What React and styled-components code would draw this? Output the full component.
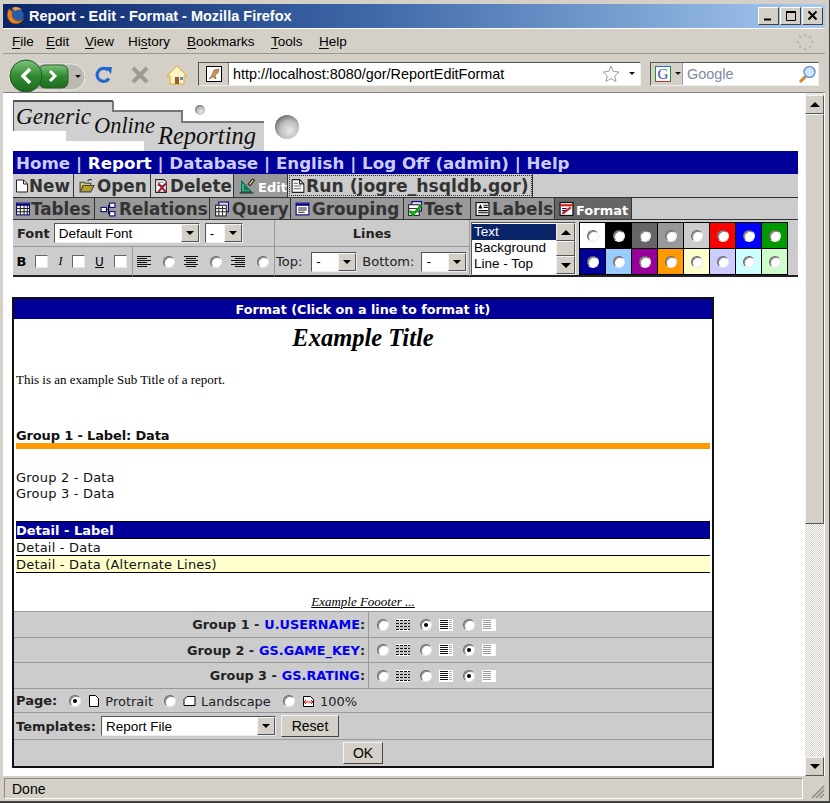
import React from 'react'
import styled, { createGlobalStyle } from 'styled-components'

const Global = createGlobalStyle`
html, body { margin: 0; padding: 0; background: #d4d0c8; overflow: hidden; }
* { box-sizing: border-box; }
`
const VERDANA = `"DejaVu Sans", sans-serif`
const TAHOMA = `"Liberation Sans", sans-serif`

const Window = styled.div`
width: 830px;
height: 803px;
display: flex;
flex-direction: column;
padding: 4px 4px 0 3px;
background: #d4d0c8;
border-right: 1px solid #404040;
border-bottom: 2px solid #404040;
font-family: ${TAHOMA};
overflow: hidden;
`
const TitleBar = styled.div`
height: 24px;
flex: none;
display: flex;
align-items: center;
padding: 0 2px 1px 3px;
background: linear-gradient(90deg, #0a246a 0%, #3f69a8 45%, #a6caf0 100%);
`
const TitleText = styled.span`
flex: 1;
margin-left: 4px;
color: #fff;
font: bold 14.5px ${TAHOMA};
`
const WinButton = styled.div`
width: 21px;
height: 18px;
display: flex;
align-items: center;
justify-content: center;
margin-left: 1px;
background: #d4d0c8;
border: 1px solid;
border-color: #fff #404040 #404040 #fff;
`
const MenuBar = styled.div`
height: 26px;
flex: none;
display: flex;
align-items: center;
padding: 1px 8px 0 9px;
border-bottom: 1px solid #9a978f;
border-top: 1px solid #fff;
font-size: 13.5px;
color: #000;
`
const MenuItem = styled.span`
width: ${p => p.$w}px;
flex: none;
u { text-underline-offset: 2px; }
`
const Throbber = styled.svg`
margin-left: auto;
margin-right: 3px;
`
const NavBar = styled.div`
height: 39px;
flex: none;
display: flex;
align-items: center;
padding: 2px 4px 0 6px;
border-bottom: 1px solid #808080;
`
const BackForward = styled.svg`
flex: none;
margin-top: 1px;
`
const NavIcon = styled.svg`
flex: none;
margin-top: 1px;
margin-left: ${p => p.$gap}px;
`
const UrlBox = styled.div`
width: 443px;
height: 24px;
flex: none;
display: flex;
align-items: center;
margin-left: 11px;
background: #fff;
border: 1px solid;
border-color: #555 #eee #eee #555;
font-size: 14.4px;
`
const Favicon = styled.div`
width: 30px;
height: 22px;
flex: none;
display: flex;
align-items: center;
justify-content: center;
margin-right: 4px;
background: #d4d0c8;
border-right: 1px solid #808080;
`
const UrlText = styled.span`
flex: 1;
color: #000;
`
const SearchBox = styled(UrlBox)`
width: 169px;
margin-left: 9px;
`
const EngineButton = styled.div`
width: 32px;
height: 22px;
flex: none;
display: flex;
align-items: center;
gap: 4px;
padding-left: 4px;
margin-right: 4px;
background: #d4d0c8;
border-right: 1px solid #a0a0a0;
`
const GoogleIcon = styled.div`
width: 16px;
height: 16px;
display: flex;
align-items: center;
justify-content: center;
background: #fff;
border: 1px solid;
border-color: #2a6fd0 #1a9a1a #d03030 #1a9a1a;
color: #1f4fc0;
font: 15px "Liberation Serif", serif;
line-height: 14px;
`
const Placeholder = styled.span`
flex: 1;
color: #7c8aa0;
`

const Viewport = styled.div`
flex: 1;
min-height: 0;
display: flex;
background: #fff;
`
const Page = styled.div`
flex: 1;
min-width: 0;
padding: 7px 0 0 10px;
overflow: hidden;
`
const LogoArt = styled.svg`
display: block;
`
const SiteNav = styled.div`
width: 785px;
height: 23px;
display: flex;
align-items: center;
padding-left: 3px;
background: #000099;
color: #ccccff;
font: bold 16.7px ${VERDANA};
white-space: pre;
b { color: #fff; }
`
const ActionRow = styled.div`
width: 785px;
height: 24px;
display: flex;
align-items: stretch;
background: #ccc;
border-bottom: 1px solid #333;
`
const TabRow = styled(ActionRow)`
height: 22px;
`
const ActionCell = styled.div`
width: ${p => p.$w}px;
flex: none;
display: flex;
align-items: center;
padding-left: 1px;
border-right: 1px solid #333;
background: ${p => (p.$active || p.$tab ? '#999' : '#ccc')};
color: ${p => (p.$active ? '#fff' : '#333')};
font: bold ${p => (p.$active ? 13 : p.$focus ? 17.2 : 16.8)}px ${VERDANA};
white-space: nowrap;
${p => p.$active && p.$tab && 'background: #666;'}
${p => p.$focus && 'outline: 1px dotted #333; outline-offset: -2px;'}
`
const IconSlot = styled.span`
width: ${p => p.$w}px;
flex: none;
display: flex;
align-items: center;
justify-content: center;
`
const ActiveLabel = styled.span`
margin-top: 4px;
`

const FormatBar = styled.div`
width: 785px;
height: 57px;
display: grid;
grid-template-columns: 262px 195px 108px 220px;
grid-template-rows: 27px 29px;
background: #ccc;
border-bottom: 2px solid #222;
font: 13px ${VERDANA};
color: #222;
`
const ToolCell = styled.div`
display: flex;
align-items: center;
min-width: 0;
border-right: 1px solid #999;
border-bottom: ${p => (p.$top ? '1px solid #999' : 'none')};
padding-left: ${p => p.$pad ?? 0}px;
justify-content: ${p => (p.$center ? 'center' : 'flex-start')};
`
const StyleSplit = styled.div`
width: 120px;
height: 100%;
flex: none;
display: flex;
align-items: center;
padding-left: 3px;
border-right: 1px solid #999;
`
const ListCell = styled.div`
grid-row: 1 / 3;
grid-column: 3;
padding: 2px 2px 1px 1px;
`
const ListBox = styled.div`
height: 100%;
display: flex;
background: #fff;
border: 1px solid;
border-color: #555 #eee #eee #555;
font: 13.5px ${TAHOMA};
color: #000;
`
const ListItems = styled.div`
flex: 1;
padding-top: 1px;
`
const ListItem = styled.div`
height: 16px;
line-height: 16px;
padding-left: 2px;
background: ${p => (p.$on ? '#0a246a' : 'transparent')};
color: ${p => (p.$on ? '#fff' : '#000')};
`
const MiniScroll = styled.div`
width: 19px;
flex: none;
display: flex;
flex-direction: column;
`
const ArrowButton = styled.div`
width: ${p => p.$w ?? 19}px;
height: ${p => p.$h ?? 19}px;
flex: ${p => (p.$grow ? 1 : 'none')};
display: flex;
align-items: center;
justify-content: center;
background: #d4d0c8;
border: 1px solid;
border-color: #f4f4f4 #555 #555 #f4f4f4;
`
const Triangle = styled.i`
display: block;
width: 0;
height: 0;
border-left: ${p => p.$s ?? 4}px solid transparent;
border-right: ${p => p.$s ?? 4}px solid transparent;
${p => (p.$up ? 'border-bottom' : 'border-top')}: ${p => p.$s ?? 4}px solid #000;
`
const SwatchCell = styled.div`
grid-row: 1 / 3;
grid-column: 4;
padding: 2px 0 0 1px;
`
const SwatchGrid = styled.div`
width: 209px;
display: grid;
grid-template-columns: repeat(8, 26px);
grid-auto-rows: 26px;
background: #000;
border-top: 1px solid #000;
border-left: 1px solid #000;
`
const Swatch = styled.div`
display: flex;
align-items: center;
justify-content: center;
background: ${p => p.$c};
border-right: 1px solid #000;
border-bottom: 1px solid #000;
`
const Radio = styled.input.attrs({ type: 'radio', readOnly: true, tabIndex: -1 })`
appearance: none;
width: 12px;
height: 12px;
flex: none;
margin: 0;
border-radius: 50%;
background: #fff;
border: 1px solid;
border-color: #666 #e8e8e8 #e8e8e8 #666;
box-shadow: inset 1px 1px 0 #888;
position: relative;
&:checked::after {
  content: '';
  position: absolute;
  left: 3px;
  top: 3px;
  width: 4px;
  height: 4px;
  border-radius: 50%;
  background: #000;
}
`
const SelectBox = styled.div`
width: ${p => p.$w}px;
height: 20px;
flex: none;
display: flex;
align-items: center;
margin-left: ${p => p.$ml ?? 0}px;
background: #fff;
border: 1px solid;
border-color: #555 #eee #eee #555;
font: 13.5px ${TAHOMA};
color: #000;
`
const SelectText = styled.span`
flex: 1;
padding-left: 4px;
white-space: nowrap;
`
const CheckBox = styled.span`
width: 13px;
height: 13px;
flex: none;
background: #fff;
border: 1px solid;
border-color: #666 #e8e8e8 #e8e8e8 #666;
margin: 0 ${p => p.$mr}px 0 ${p => p.$ml}px;
`
const StyleLabel = styled.span`
width: 11px;
flex: none;
text-align: center;
color: #000;
font: ${p => (p.$b ? 'bold 13px' : '12px')} ${p => (p.$i ? '"Liberation Serif", serif' : VERDANA)};
font-style: ${p => (p.$i ? 'italic' : 'normal')};
text-decoration: ${p => (p.$u ? 'underline' : 'none')};
`
const AlignGroup = styled.div`
display: flex;
align-items: center;
gap: 9px;
padding-left: 4px;
`
const AlignItem = styled.div`
display: flex;
align-items: center;
gap: 11px;
`
const Bold = styled.b`
margin-right: ${p => p.$mr ?? 0}px;
`
const LineLabel = styled.span`
margin-left: ${p => p.$ml ?? 0}px;
`

const Panel = styled.div`
width: 702px;
margin: 20px 0 0 -1px;
border: 2px solid #111;
background: #fff;
`
const PanelHeader = styled.div`
height: 20px;
display: flex;
align-items: center;
justify-content: center;
background: #000099;
color: #fff;
font: bold 12.75px ${VERDANA};
`
const ReportTitle = styled.div`
height: 36px;
text-align: center;
font: italic bold 24.5px/37px "Liberation Serif", serif;
color: #000;
`
const Report = styled.div`
padding: 0 2px;
color: #111;
font: 13px/16px ${VERDANA};
letter-spacing: 0.2px;
`
const SubTitle = styled.div`
margin-top: 17px;
font: 13px/16px "Liberation Serif", serif;
letter-spacing: 0;
color: #000;
`
const GroupLabel = styled.div`
margin-top: 40px;
height: 15px;
font-weight: bold;
letter-spacing: -0.15px;
`
const OrangeBar = styled.div`
height: 6px;
background: #ff9900;
`
const GroupData = styled.div`
margin-top: ${p => p.$mt ?? 0}px;
`
const DetailLabel = styled.div`
margin-top: 19px;
height: 18px;
line-height: 17px;
background: #000099;
color: #fff;
font-weight: bold;
letter-spacing: 0;
border-top: 1px solid #000;
border-bottom: 1px solid #000;
`
const DetailRow = styled.div`
height: 17px;
line-height: 18px;
background: ${p => (p.$alt ? '#ffffcc' : '#fff')};
border-bottom: 1px solid #000;
`
const Footer = styled.div`
margin-top: 21px;
height: 17px;
text-align: center;
font: italic 13px/16px "Liberation Serif", serif;
letter-spacing: 0;
text-decoration: underline;
color: #000;
`
const FormRow = styled.div`
height: ${p => p.$h}px;
display: flex;
align-items: center;
background: #ccc;
border-top: 1px solid #999;
color: #222;
font: 13px ${VERDANA};
padding-left: ${p => p.$pad ?? 0}px;
justify-content: ${p => (p.$center ? 'center' : 'flex-start')};
`
const GroupName = styled.div`
width: 355px;
height: 100%;
flex: none;
display: flex;
align-items: center;
justify-content: flex-end;
padding-right: 3px;
font-weight: bold;
font-size: 12.8px;
border-right: 1px solid #999;
color: #222;
span { color: #0000ee; margin-left: 5px; }
`
const GroupChoices = styled.div`
display: flex;
align-items: center;
padding-left: 8px;
`
const Choice = styled.div`
width: 43px;
display: flex;
align-items: center;
gap: 7px;
`
const PageOption = styled.label`
display: flex;
align-items: center;
margin-left: ${p => p.$ml}px;
gap: 7px;
`
const PageText = styled.span`
display: flex;
align-items: center;
gap: 5px;
padding-top: 1px;
`
const FormButton = styled.button`
width: ${p => p.$w}px;
height: 22px;
flex: none;
margin-left: ${p => p.$ml ?? 0}px;
padding: 0;
background: #d4d0c8;
border: 1px solid;
border-color: #f4f4f4 #444 #444 #f4f4f4;
color: #000;
font: 14px ${TAHOMA};
`

const ScrollBar = styled.div`
width: 19px;
flex: none;
margin-right: 1px;
display: flex;
flex-direction: column;
padding-top: 2px;
background: repeating-conic-gradient(#d4d0c8 0 25%, #fff 0 50%) 0 0 / 2px 2px;
`
const Thumb = styled.div`
height: 410px;
flex: none;
background: #d4d0c8;
border: 1px solid;
border-color: #f4f4f4 #555 #555 #f4f4f4;
`
const Track = styled.div`
flex: 1;
`
const StatusBar = styled.div`
height: 25px;
flex: none;
display: flex;
align-items: center;
padding: 2px 0 2px 1px;
font-size: 14px;
color: #000;
background: #d4d0c8;
`
const StatusText = styled.div`
width: 799px;
height: 21px;
display: flex;
align-items: center;
padding-left: 7px;
border: 1px solid;
border-color: #8a8880 #fff #fff #8a8880;
`
const Grip = styled.svg`
margin-left: 8px;
margin-top: 6px;
flex: none;
`

const Ico = ({ name, size }) => {
  const common = { width: size, height: 16, viewBox: '0 0 14 15', style: { flex: 'none' } }
  switch (name) {
    case 'new':
    case 'run':
      return (
        <svg {...common}>
          <path d="M1.500 1.500h7l4 4v8h-11z" fill="#fff" stroke="#222" />
          <path d="M8.500 1.500v4h4" fill="none" stroke="#222" />
          {name === 'run' && <path d="M3 5h4M3 7.500h7M3 10h7" stroke="#666" />}
        </svg>
      )
    case 'open':
      return (
        <svg {...common}>
          <path d="M1 4h4l1 1h5v2H4l-3 6z" fill="#d8c860" stroke="#444" />
          <path d="M1 13l3-6h10l-3 6z" fill="#b8a030" stroke="#444" />
          <path d="M8 3c1-2 3-2 4-1" fill="none" stroke="#222" />
        </svg>
      )
    case 'delete':
      return (
        <svg {...common}>
          <path d="M1.500 1.500h8l2 2v10h-10z" fill="#fff" stroke="#222" />
          <path d="M3 4h6M3 7h6" stroke="#888" />
          <path d="M4 5l7 8M11 5l-7 8" stroke="#a01830" strokeWidth="2" />
        </svg>
      )
    case 'edit':
      return (
        <svg {...common}>
          <path d="M2 13V3l9 10z" fill="#40c0b0" stroke="#063" />
          <path d="M4.500 11V8l3 3z" fill="#999" stroke="#063" />
          <path d="M8 6l4-5 2 1-4 5z" fill="#ffe060" stroke="#222" />
          <path d="M0 14h13" stroke="#222" />
        </svg>
      )
    case 'tables':
      return (
        <svg {...common}>
          <rect x="1" y="2" width="12" height="11" fill="#fff" stroke="#000080" />
          <path d="M1 3.500h12" stroke="#000080" strokeWidth="2" />
          <path d="M1 7h12M1 10h12M4.500 4v9M8 4v9M11 4v9" stroke="#222" />
        </svg>
      )
    case 'relations':
      return (
        <svg {...common}>
          <rect x="0.500" y="6" width="5" height="4" fill="#fff" stroke="#000080" />
          <rect x="8.500" y="2" width="5" height="4" fill="#fff" stroke="#000080" />
          <rect x="8.500" y="10" width="5" height="4" fill="#fff" stroke="#000080" />
          <path d="M6 8h1.500M7.500 4v8M7.500 4h1M7.500 12h1" stroke="#000" />
        </svg>
      )
    case 'query':
      return (
        <svg {...common}>
          <rect x="4" y="1" width="9" height="9" fill="#dde" stroke="#000080" />
          <rect x="1" y="4" width="10" height="10" fill="#fff" stroke="#222" />
          <path d="M1 7h10M1 10h10M4 5v9M7.500 5v9" stroke="#333" />
        </svg>
      )
    case 'grouping':
      return (
        <svg {...common}>
          <rect x="1" y="2" width="12" height="11" fill="#fff" stroke="#000080" />
          <path d="M1 3.500h12" stroke="#000080" strokeWidth="2" />
          <path d="M3 6.500h8M3 8.500h8M3 10.500h6" stroke="#222" />
        </svg>
      )
    case 'test':
      return (
        <svg {...common}>
          <rect x="4" y="0.500" width="9" height="9" fill="#dde" stroke="#000080" />
          <rect x="1" y="3.500" width="10" height="10" fill="#fff" stroke="#222" />
          <path d="M1 7h10M1 10h10" stroke="#333" />
          <path d="M2 9l3 4 8-9" fill="none" stroke="#0a0" strokeWidth="2.200" />
        </svg>
      )
    case 'labels':
      return (
        <svg {...common}>
          <rect x="1" y="1.500" width="12" height="12" fill="#fff" stroke="#000" />
          <path d="M5 3l-2 4h4z" fill="#000" />
          <path d="M8 4h4M8 6h4M3 9h9M3 11h9" stroke="#000" />
        </svg>
      )
    default:
      return (
        <svg {...common}>
          <rect x="1" y="1.500" width="12" height="12" fill="#fff" stroke="#000" />
          <path d="M1 4h12" stroke="#d02020" strokeWidth="2" />
          <path d="M3 12l8-6" stroke="#d02020" strokeWidth="2" />
          <path d="M3 7h4M3 9h3" stroke="#000080" />
        </svg>
      )
  }
}

const AlignIcon = ({ kind }) => {
  const short = { l: [0, 10], c: [2, 12], r: [4, 14] }[kind]
  return (
    <svg width="15" height="12" viewBox="0 0 15 12" style={{ flex: 'none' }}>
      {[1, 3, 5, 7, 9, 11].map((y, i) => (
        <path key={y} d={i % 2 ? `M${short[0]} ${y - 0.5}H${short[1]}` : `M0 ${y - 0.5}H14`} stroke="#111" />
      ))}
    </svg>
  )
}

const LineStyleIcon = ({ kind }) => (
  <svg width="14" height="12" viewBox="0 0 14 12" style={{ flex: 'none' }}>
    <rect width="14" height="12" fill="#fff" />
    {kind === 'grid' && <path d="M0 1.500h14M0 4.500h14M0 7.500h14M0 10.500h14" stroke="#111" strokeDasharray="3 1" />}
    {kind === 'grid' && <path d="M0 3h14M0 6h14M0 9h14" stroke="#888" />}
    {kind === 'rows' && <path d="M1 1.500h8M1 3.500h8M1 5.500h8M1 7.500h8M1 9.500h8" stroke="#111" />}
    {kind === 'rows' && <path d="M10 1.500h3M10 3.500h3M10 5.500h3M10 7.500h3M10 9.500h3" stroke="#aaa" />}
    {kind === 'plain' && <path d="M1 1.500h8M1 3.500h8M1 5.500h8M1 7.500h8M1 9.500h8" stroke="#999" />}
  </svg>
)

const Select = ({ w, text, ml }) => (
  <SelectBox $w={w} $ml={ml}>
    <SelectText>{text}</SelectText>
    <ArrowButton $w={18} $h={18}>
      <Triangle />
    </ArrowButton>
  </SelectBox>
)

const GroupRow = ({ h, name, field, sel }) => (
  <FormRow $h={h}>
    <GroupName>
      {name} -<span>{field}</span>:
    </GroupName>
    <GroupChoices>
      {['grid', 'rows', 'plain'].map((k, i) => (
        <Choice key={k}>
          <Radio checked={sel === i} />
          <LineStyleIcon kind={k} />
        </Choice>
      ))}
    </GroupChoices>
  </FormRow>
)

const actions = [
  { icon: 'new', label: 'New', w: 61, slot: 15 },
  { icon: 'open', label: 'Open', w: 77, slot: 22 },
  { icon: 'delete', label: 'Delete', w: 83, slot: 18 },
  { icon: 'edit', label: 'Edit', w: 54, slot: 23, active: true },
  { icon: 'run', label: 'Run (jogre_hsqldb.gor)', w: 245, slot: 17, focus: true },
]
const tabs = [
  { icon: 'tables', label: 'Tables', w: 82, slot: 17 },
  { icon: 'relations', label: 'Relations', w: 115, slot: 23 },
  { icon: 'query', label: 'Query', w: 81, slot: 21 },
  { icon: 'grouping', label: 'Grouping', w: 113, slot: 20 },
  { icon: 'test', label: 'Test', w: 67, slot: 19 },
  { icon: 'labels', label: 'Labels', w: 84, slot: 20 },
  { icon: 'format', label: 'Format', w: 77, slot: 20, active: true },
]
const swatches = ['#fff', '#000', '#666', '#999', '#ccc', '#f00', '#00f', '#090', '#009', '#9cf', '#909', '#f90', '#ffc', '#ccf', '#cff', '#cfc']
const menus = [
  [<><u>F</u>ile</>, 34],
  [<><u>E</u>dit</>, 39],
  [<><u>V</u>iew</>, 43],
  [<>Hi<u>s</u>tory</>, 59],
  [<><u>B</u>ookmarks</>, 84],
  [<><u>T</u>ools</>, 48],
  [<><u>H</u>elp</>, 40],
]

const App = () => {
  return (
    <>
      <Global />
      <Window>
        <TitleBar>
          <svg width="19" height="19" viewBox="0 0 19 19" style={{ flex: 'none' }}>
            <circle cx="10" cy="9.500" r="7.500" fill="#2a5ca8" />
            <path d="M3 3c-3 5-2 11 3 14 5 2 10 0 12-5-2 3-6 4-9 2C6 12 5 8 7 5 5 6 4 5 4 3z" fill="#e8841c" stroke="#a04808" strokeWidth="0.500" />
            <path d="M6 2c3-2 8-1 10 2-3-1-5 0-7 1z" fill="#f0a030" />
          </svg>
          <TitleText>Report - Edit - Format - Mozilla Firefox</TitleText>
          <WinButton>
            <svg width="11" height="11"><path d="M1 9.500h7" stroke="#000" strokeWidth="2" /></svg>
          </WinButton>
          <WinButton>
            <svg width="12" height="12"><path d="M1.500 2.500h9v8h-9z" fill="none" stroke="#000" /><path d="M1 2h10" stroke="#000" strokeWidth="2" /></svg>
          </WinButton>
          <WinButton>
            <svg width="11" height="11"><path d="M1.500 1.500l8 8M9.500 1.500l-8 8" stroke="#000" strokeWidth="2" /></svg>
          </WinButton>
        </TitleBar>
        <MenuBar>
          {menus.map(([label, w]) => (
            <MenuItem key={w} $w={w}>{label}</MenuItem>
          ))}
          <Throbber width="18" height="18" viewBox="0 0 18 18">
            {[0, 45, 90, 135, 180, 225, 270, 315].map(a => (
              <circle key={a} cx={9 + 7 * Math.cos((a * Math.PI) / 180)} cy={9 + 7 * Math.sin((a * Math.PI) / 180)} r="1.500" fill="#bdbab2" />
            ))}
          </Throbber>
        </MenuBar>
        <NavBar>
          <BackForward width="76" height="34" viewBox="0 0 76 34">
            <defs>
              <linearGradient id="navgreen" x1="0" y1="0" x2="0" y2="1">
                <stop offset="0" stopColor="#7fc27f" />
                <stop offset="0.5" stopColor="#2f8a2f" />
                <stop offset="1" stopColor="#1e6a1e" />
              </linearGradient>
            </defs>
            <rect x="0" y="6" width="76" height="26" rx="13" fill="#bdbab2" stroke="#eee" />
            <rect x="30" y="7" width="29" height="23" rx="6" fill="url(#navgreen)" stroke="#2a5a2a" />
            <circle cx="17" cy="18" r="16" fill="url(#navgreen)" stroke="#1c5c1c" />
            <path d="M21 11l-7 7 7 7" fill="none" stroke="#fff" strokeWidth="3.500" />
            <path d="M41 13l5 5-5 5" fill="none" stroke="#fff" strokeWidth="3" />
            <path d="M66 17h6l-3 3z" fill="#111" />
          </BackForward>
          <NavIcon $gap={9} width="20" height="20" viewBox="0 0 20 20">
            <path d="M15 13.500A6.500 6.500 0 1 1 14 5" fill="none" stroke="#2468d0" strokeWidth="3.200" />
            <path d="M11 2l7 0-1 7z" fill="#2468d0" />
          </NavIcon>
          <NavIcon $gap={16} width="20" height="20" viewBox="0 0 20 20">
            <path d="M3 3l14 14M17 3L3 17" stroke="#9c9a94" strokeWidth="4" />
          </NavIcon>
          <NavIcon $gap={17} width="20" height="20" viewBox="0 0 20 20">
            <path d="M10 1L0 11h3v8h14v-8h3z" fill="#fff4c8" stroke="#e8a820" />
            <rect x="8" y="12" width="4" height="7" fill="#a05a28" />
            <rect x="13" y="12" width="3" height="3" fill="#5a8ad0" />
          </NavIcon>
          <UrlBox>
            <Favicon>
              <svg width="16" height="16" viewBox="0 0 16 16">
                <rect x="0.500" y="0.500" width="15" height="15" fill="#fff" stroke="#000" />
                <path d="M3 13l3-4 2-5 5-1-1 4-3 2 1 4-3-2z" fill="#c89850" stroke="#604020" strokeWidth="0.500" />
              </svg>
            </Favicon>
            <UrlText>http://localhost:8080/gor/ReportEditFormat</UrlText>
            <svg width="18" height="18" viewBox="0 0 18 18" style={{ flex: 'none', marginRight: 8 }}>
              <path d="M9 1l2.400 5.500 5.600.5-4.300 3.800 1.300 5.700-5-3-5 3 1.300-5.700L1 7l5.600-.5z" fill="#fff" stroke="#9a9a9a" />
            </svg>
            <svg width="8" height="6" style={{ flex: 'none', marginRight: 4 }}><path d="M1 1h6L4 4z" fill="#111" /></svg>
          </UrlBox>
          <SearchBox>
            <EngineButton>
              <GoogleIcon>G</GoogleIcon>
              <svg width="7" height="5" style={{ flex: 'none' }}><path d="M0 0h6L3 3z" fill="#111" /></svg>
            </EngineButton>
            <Placeholder>Google</Placeholder>
            <svg width="19" height="19" viewBox="0 0 19 19" style={{ flex: 'none', marginRight: 1 }}>
              <circle cx="11.500" cy="7" r="5.500" fill="#cfe4fa" stroke="#6a9ad0" strokeWidth="1.500" />
              <path d="M7.500 11.500L2 17" stroke="#d08a30" strokeWidth="3" />
            </svg>
          </SearchBox>
        </NavBar>
        <Viewport>
          <Page>
            <LogoArt width="300" height="51" viewBox="0 0 300 51">
              <defs>
                <radialGradient id="ball" cx="0.600" cy="0.650" r="0.750">
                  <stop offset="0" stopColor="#e8e8e8" />
                  <stop offset="0.550" stopColor="#bbb" />
                  <stop offset="1" stopColor="#555" />
                </radialGradient>
              </defs>
              <path d="M0 1H100V11H169V22H251V51H131V41H53V31H0z" fill="#d0d0d0" />
              <path d="M0 31V1H100" fill="none" stroke="#555" strokeWidth="2" />
              <path d="M100 1V11H169V22H251" fill="none" stroke="#777" strokeWidth="2" />
              <circle cx="187" cy="10" r="5" fill="url(#ball)" />
              <circle cx="274" cy="27" r="12" fill="url(#ball)" />
              <text x="3" y="24" fontFamily="Liberation Serif, serif" fontStyle="italic" fontSize="24" textLength="75" lengthAdjust="spacingAndGlyphs" fill="#111">Generic</text>
              <text x="81" y="33" fontFamily="Liberation Serif, serif" fontStyle="italic" fontSize="24" textLength="61" lengthAdjust="spacingAndGlyphs" fill="#111">Online</text>
              <text x="145" y="44" fontFamily="Liberation Serif, serif" fontStyle="italic" fontSize="25" textLength="98" lengthAdjust="spacingAndGlyphs" fill="#111">Reporting</text>
            </LogoArt>
            <SiteNav>
              Home | <b>Report</b> | Database | English | Log Off (admin) | Help
            </SiteNav>
            <ActionRow>
              {actions.map(a => (
                <ActionCell key={a.label} $w={a.w} $active={a.active} $focus={a.focus}>
                  <IconSlot $w={a.slot}><Ico name={a.icon} size={a.slot - 1} /></IconSlot>
                  {a.active ? <ActiveLabel>{a.label}</ActiveLabel> : a.label}
                </ActionCell>
              ))}
            </ActionRow>
            <TabRow>
              {tabs.map(t => (
                <ActionCell key={t.label} $tab $w={t.w} $active={t.active}>
                  <IconSlot $w={t.slot}><Ico name={t.icon} size={t.slot - 1} /></IconSlot>
                  {t.active ? <ActiveLabel>{t.label}</ActiveLabel> : t.label}
                </ActionCell>
              ))}
            </TabRow>
            <FormatBar>
              <ToolCell $top $pad={4}>
                <Bold $mr={4}>Font</Bold>
                <Select w={146} text="Default Font" />
                <Select w={38} text="-" ml={5} />
              </ToolCell>
              <ToolCell $top $center><b>Lines</b></ToolCell>
              <ListCell>
                <ListBox>
                  <ListItems>
                    <ListItem $on>Text</ListItem>
                    <ListItem>Background</ListItem>
                    <ListItem>Line - Top</ListItem>
                  </ListItems>
                  <MiniScroll>
                    <ArrowButton $h={18}><Triangle $up $s={5} /></ArrowButton>
                    <ArrowButton $grow $h={10} />
                    <ArrowButton $h={18}><Triangle $s={5} /></ArrowButton>
                  </MiniScroll>
                </ListBox>
              </ListCell>
              <SwatchCell>
                <SwatchGrid>
                  {swatches.map(c => (
                    <Swatch key={c} $c={c}><Radio /></Swatch>
                  ))}
                </SwatchGrid>
              </SwatchCell>
              <ToolCell>
                <StyleSplit>
                  <StyleLabel $b>B</StyleLabel>
                  <CheckBox $ml={8} $mr={7} />
                  <StyleLabel $i>I</StyleLabel>
                  <CheckBox $ml={6} $mr={9} />
                  <StyleLabel $u>U</StyleLabel>
                  <CheckBox $ml={9} $mr={0} />
                </StyleSplit>
                <AlignGroup>
                  {['l', 'c', 'r'].map(k => (
                    <AlignItem key={k}>
                      <AlignIcon kind={k} />
                      <Radio />
                    </AlignItem>
                  ))}
                </AlignGroup>
              </ToolCell>
              <ToolCell $pad={1}>
                Top:
                <Select w={46} text="-" ml={9} />
                <LineLabel $ml={5}>Bottom:</LineLabel>
                <Select w={46} text="-" ml={7} />
              </ToolCell>
            </FormatBar>
            <Panel>
              <PanelHeader>Format (Click on a line to format it)</PanelHeader>
              <ReportTitle>Example Title</ReportTitle>
              <Report>
                <SubTitle>This is an example Sub Title of a report.</SubTitle>
                <GroupLabel>Group 1 - Label: Data</GroupLabel>
                <OrangeBar />
                <GroupData $mt={21}>Group 2 - Data</GroupData>
                <GroupData>Group 3 - Data</GroupData>
                <DetailLabel>Detail - Label</DetailLabel>
                <DetailRow>Detail - Data</DetailRow>
                <DetailRow $alt>Detail - Data (Alternate Lines)</DetailRow>
                <Footer>Example Foooter ...</Footer>
              </Report>
              <GroupRow h={26} name="Group 1" field="U.USERNAME" sel={1} />
              <GroupRow h={25} name="Group 2" field="GS.GAME_KEY" sel={2} />
              <GroupRow h={26} name="Group 3" field="GS.RATING" sel={2} />
              <FormRow $h={24} $pad={2}>
                <b>Page:</b>
                <PageOption $ml={12}>
                  <Radio checked />
                  <PageText>
                    <svg width="12" height="14" viewBox="0 0 12 14"><path d="M1.500 1.500h6l3 3v8h-9z" fill="#fff" stroke="#000" /></svg>
                    Protrait
                  </PageText>
                </PageOption>
                <PageOption $ml={11}>
                  <Radio />
                  <PageText>
                    <svg width="13" height="12" viewBox="0 0 13 12"><path d="M4 1.500h8v9H1V4.500z" fill="#fff" stroke="#000" /></svg>
                    Landscape
                  </PageText>
                </PageOption>
                <PageOption $ml={12}>
                  <Radio />
                  <PageText>
                    <svg width="13" height="13" viewBox="0 0 13 13">
                      <path d="M1.500 1.500h7l3 3v7h-10z" fill="#fff" stroke="#000" />
                      <path d="M2 7h9M2 7l2-2M2 7l2 2M11 7L9 5M11 7L9 9" stroke="#e01010" />
                    </svg>
                    100%
                  </PageText>
                </PageOption>
              </FormRow>
              <FormRow $h={27} $pad={2}>
                <b>Templates:</b>
                <Select w={175} text="Report File" ml={5} />
                <FormButton $w={58} $ml={5}>Reset</FormButton>
              </FormRow>
              <FormRow $h={27} $center>
                <FormButton $w={40}>OK</FormButton>
              </FormRow>
            </Panel>
          </Page>
          <ScrollBar>
            <ArrowButton><Triangle $up $s={5} /></ArrowButton>
            <Thumb />
            <Track />
            <ArrowButton><Triangle $s={5} /></ArrowButton>
          </ScrollBar>
        </Viewport>
        <StatusBar>
          <StatusText>Done</StatusText>
          <Grip width="14" height="14" viewBox="0 0 14 14">
            <path d="M13 1L1 13M13 5L5 13M13 9L9 13" stroke="#8a8880" strokeWidth="1.500" />
          </Grip>
        </StatusBar>
      </Window>
    </>
  )
}

export default App
